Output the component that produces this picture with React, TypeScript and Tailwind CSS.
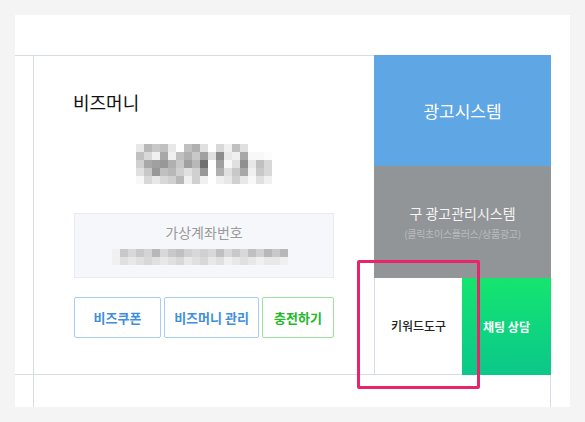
import React from "react";

const FONT = { fontFamily: '"Noto Sans CJK KR", "Noto Sans", sans-serif' };

// blurred balance, grey levels per mosaic cell (8px)
const amountRows = [
  "e8 b8 c8 c0 e8 ff c0 b0 e0 ff d8 f0 c0 e0 ff ff ff",
  "c0 d8 f0 a8 f0 c0 b0 c8 a0 e0 8c e8 f0 a8 f8 f8 fc",
  "d0 a8 a0 98 b0 c8 a0 b8 70 ff a0 f8 e0 90 e8 c0 d8",
  "e0 c8 98 c0 b8 d0 e0 d0 98 ff b0 e0 c8 a8 f0 c8 d8",
  "f8 d8 e8 d8 d0 b8 f0 d0 f0 ff f0 e8 d0 e8 f8 e0 f0",
];

const accountRows = [
  "f0 c8 d8 c8 d4 b8 d8 c8 c0 d0 d8 d0 d8 c0 d8 c8 d8 c0 d0 b8 c8 b8",
  "f0 e0 e8 e0 d8 e0 e8 e0 d8 e8 e0 d8 e8 e0 f0 e8 e0 e8 f0 e8 e8 f0",
];

function Mosaic({ rows, cw, ch }: { rows: string[]; cw: number; ch: number }) {
  const cells = rows.map((r) => r.split(" "));
  const w = cells[0].length * cw;
  const h = cells.length * ch;
  return (
    <svg width={w} height={h} className="block">
      {cells.map((row, y) =>
        row.map((v, x) => (
          <rect key={`${x}-${y}`} x={x * cw} y={y * ch} width={cw} height={ch} fill={`#${v}${v}${v}`} />
        ))
      )}
    </svg>
  );
}

export default function App() {
  return (
    <div className="w-full h-[422px] bg-[#f4f4f4] pt-[15px] pl-[15px]" style={FONT}>
      <div className="relative w-[555px] h-[392px] bg-white flex flex-col">
        <div className="h-[40px]" />

        <div className="flex h-[320px]">
          {/* left info block */}
          <div className="flex w-[359px] border-t border-b border-[#d6dce3]">
            <div className="w-[19px] border-r border-[#d6dce3]" />
            <div className="flex-1 pl-[40px] pt-[33px]">
              <h2 className="text-[18px] leading-[26px] text-[#111] -ml-[1px]">비즈머니</h2>
              <div className="flex justify-center w-[260px] mt-[29px]">
                <Mosaic rows={amountRows} cw={8} ch={8} />
              </div>
              <div className="mt-[29px] w-[260px] h-[65px] bg-[#f5f7fa] border border-[#e8ebef] flex flex-col items-center pt-[8px]">
                <span className="text-[14px] leading-[20px] text-[#9a9a9a]">가상계좌번호</span>
                <div className="mt-[7px] mr-[8px]">
                  <Mosaic rows={accountRows} cw={8} ch={8} />
                </div>
              </div>
              <div className="mt-[19px] flex gap-[3px] w-[260px] h-[41px]">
                <button className="w-[87px] rounded-[2px] border border-solid border-[#a6cdf2] text-[13px] font-bold text-[#3e8fdc]">
                  비즈쿠폰
                </button>
                <button className="w-[95px] rounded-[2px] border border-solid border-[#a6cdf2] text-[13px] font-bold text-[#3e8fdc]">
                  비즈머니 관리
                </button>
                <button className="flex-1 rounded-[2px] border border-solid border-[#9be29b] text-[13px] font-bold text-[#22b82a]">
                  충전하기
                </button>
              </div>
            </div>
          </div>

          {/* right menu column */}
          <div className="w-[177px] flex flex-col">
            <div className="h-[111px] bg-[#5ea6e4] flex items-center justify-center">
              <span className="text-[17px] text-white">광고시스템</span>
            </div>
            <div className="h-[112px] bg-[#929598] flex flex-col items-center justify-center">
              <span className="text-[14px] leading-[20px] text-[#f4f4f4]">구 광고관리시스템</span>
              <span className="text-[10px] leading-[16px] mt-[3px] text-[#b9bbbd] tracking-[-0.3px]">(클릭초이스플러스/상품광고)</span>
            </div>
            <div className="flex h-[97px]">
              <div className="w-[88px] border-l border-b border-[#d6dce3] bg-white flex items-center justify-center">
                <span className="text-[12px] font-medium text-[#222]">키워드도구</span>
              </div>
              <div className="flex-1 bg-gradient-to-b from-[#15e56e] to-[#0cc78a] flex items-center justify-center">
                <span className="text-[12px] font-bold text-white">채팅 상담</span>
              </div>
            </div>
          </div>
        </div>

        <div className="flex h-[32px]">
          <div className="w-[19px] border-r border-[#d6dce3]" />
          <div className="w-[517px] border-r border-[#d6dce3]" />
        </div>

        {/* highlight marker */}
        <div className="absolute left-[342px] top-[245px] w-[123px] h-[129px] border-[3px] border-[#e8246a] rounded-[2px]" />
      </div>
    </div>
  );
}
